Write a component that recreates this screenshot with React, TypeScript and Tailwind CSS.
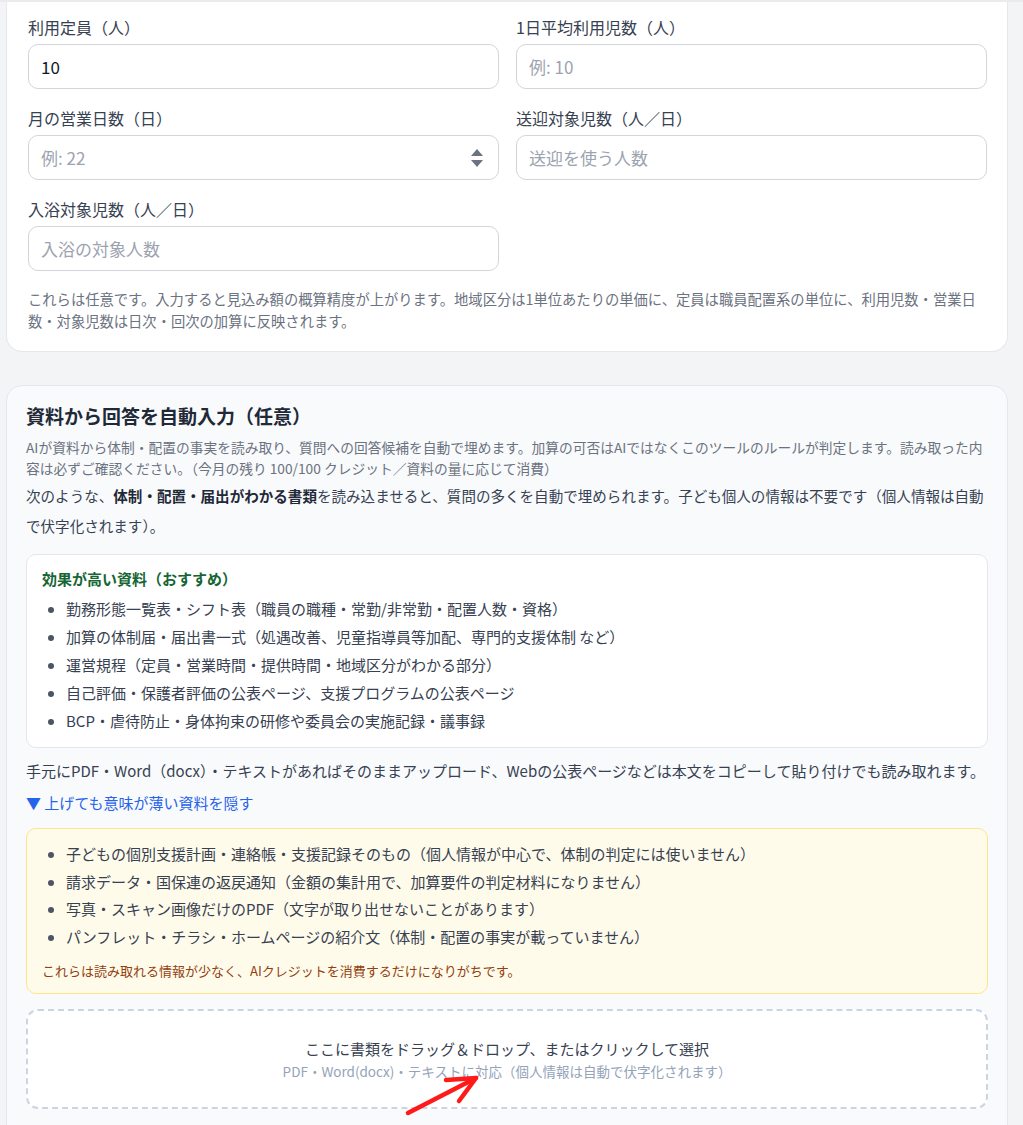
import React from 'react';

const jp = { fontFamily: '"Noto Sans CJK JP", "Liberation Sans", sans-serif' };

const Field: React.FC<{ label: string; value?: string; placeholder?: string; spinner?: boolean }> = ({
  label,
  value,
  placeholder,
  spinner,
}) => (
  <div className="flex flex-col">
    <label className="text-[16px] leading-[24px] text-[#374151]">{label}</label>
    <div className="mt-[5px] flex h-[45px] items-center rounded-[10px] border border-[#d1d5db] bg-white pl-[12px] pr-[12px]">
      {value ? (
        <span className="flex-1 text-[17px] text-[#111827]">{value}</span>
      ) : (
        <span className="flex-1 text-[17px] text-[#9ca3af]">{placeholder}</span>
      )}
      {spinner && (
        <svg width="14" height="22" viewBox="0 0 14 22" className="mr-[2px]">
          <path d="M7 2 L13 9 L1 9 Z" fill="#6b7280" />
          <path d="M7 20 L13 13 L1 13 Z" fill="#6b7280" />
        </svg>
      )}
    </div>
  </div>
);

const recommended = [
  '勤務形態一覧表・シフト表（職員の職種・常勤/非常勤・配置人数・資格）',
  '加算の体制届・届出書一式（処遇改善、児童指導員等加配、専門的支援体制 など）',
  '運営規程（定員・営業時間・提供時間・地域区分がわかる部分）',
  '自己評価・保護者評価の公表ページ、支援プログラムの公表ページ',
  'BCP・虐待防止・身体拘束の研修や委員会の実施記録・議事録',
];

const weak = [
  '子どもの個別支援計画・連絡帳・支援記録そのもの（個人情報が中心で、体制の判定には使いません）',
  '請求データ・国保連の返戻通知（金額の集計用で、加算要件の判定材料になりません）',
  '写真・スキャン画像だけのPDF（文字が取り出せないことがあります）',
  'パンフレット・チラシ・ホームページの紹介文（体制・配置の事実が載っていません）',
];

export default function App() {
  return (
    <div className="relative min-h-screen bg-[#f3f4f6] pl-[6px] pr-[15px]" style={jp}>
      <div className="h-[2px] bg-[#ebebeb] -ml-[6px] -mr-[15px]" />

      {/* 基本情報カード */}
      <div className="rounded-b-[16px] border border-t-0 border-[#e5e7eb] bg-white pb-[19px] pl-[21px] pr-[20px] pt-[13px]">
        <div className="grid grid-cols-2 gap-x-[17px] gap-y-[17px]">
          <Field label="利用定員（人）" value="10" />
          <Field label="1日平均利用児数（人）" placeholder="例: 10" />
          <Field label="月の営業日数（日）" placeholder="例: 22" spinner />
          <Field label="送迎対象児数（人／日）" placeholder="送迎を使う人数" />
          <Field label="入浴対象児数（人／日）" placeholder="入浴の対象人数" />
        </div>
        <p className="mt-[17px] text-[14.3px] leading-[22px] text-[#6b7280]">
          これらは任意です。入力すると見込み額の概算精度が上がります。地域区分は1単位あたりの単価に、定員は職員配置系の単位に、利用児数・営業日数・対象児数は日次・回次の加算に反映されます。
        </p>
      </div>

      {/* 資料アップロードカード */}
      <div className="mt-[33px] rounded-[16px] border border-[#e2e8f0] bg-[#f8fafc] px-[19px] pb-[40px] pt-[16px]">
        <h2 className="text-[19px] font-bold leading-[28px] text-[#1f2937]">資料から回答を自動入力（任意）</h2>
        <p className="mt-[7px] text-[13.75px] leading-[21px] text-[#6b7280]">
          AIが資料から体制・配置の事実を読み取り、質問への回答候補を自動で埋めます。加算の可否はAIではなくこのツールのルールが判定します。読み取った内容は必ずご確認ください。（今月の残り 100/100 クレジット／資料の量に応じて消費）
        </p>
        <p className="mt-[2px] text-[14.55px] leading-[30px] text-[#374151]">
          次のような、<span className="font-bold text-[#1f2937]">体制・配置・届出がわかる書類</span>
          を読み込ませると、質問の多くを自動で埋められます。子ども個人の情報は不要です（個人情報は自動で伏字化されます）。
        </p>

        <div className="mt-[13px] rounded-[10px] border border-[#e5e7eb] bg-white pb-[12px] pl-[15px] pr-[15px] pt-[12px]">
          <div className="text-[15px] font-bold leading-[24px] text-[#166534]">効果が高い資料（おすすめ）</div>
          <ul className="mt-[4px] list-disc pl-[24px] text-[15px] leading-[28px] text-[#374151] marker:text-[#4b5563]">
            {recommended.map((r) => (
              <li key={r}>{r}</li>
            ))}
          </ul>
        </div>

        <p className="mt-[11px] text-[15px] leading-[24px] text-[#374151]">
          手元にPDF・Word（docx）・テキストがあればそのままアップロード、Webの公表ページなどは本文をコピーして貼り付けでも読み取れます。
        </p>
        <button className="mt-[8px] block text-[15px] leading-[24px] text-[#2563eb]">▼ 上げても意味が薄い資料を隠す</button>

        <div className="mt-[13px] rounded-[10px] border border-[#fde68a] bg-[#fffbeb] pb-[12px] pl-[15px] pr-[15px] pt-[11px]">
          <ul className="list-disc pl-[24px] text-[15px] leading-[27.5px] text-[#374151] marker:text-[#4b5563]">
            {weak.map((w) => (
              <li key={w}>{w}</li>
            ))}
          </ul>
          <p className="mt-[11px] text-[13px] leading-[20px] text-[#92400e]">
            これらは読み取れる情報が少なく、AIクレジットを消費するだけになりがちです。
          </p>
        </div>

        <div className="mt-[15px] flex h-[100px] flex-col items-center justify-center rounded-[12px] border-2 border-dashed border-[#cbd5e1] bg-white">
          <div className="text-[15px] leading-[23px] text-[#374151]">ここに書類をドラッグ＆ドロップ、またはクリックして選択</div>
          <div className="text-[13.5px] leading-[22px] text-[#94a3b8]">
            PDF・Word(docx)・テキストに対応（個人情報は自動で伏字化されます）
          </div>
        </div>
      </div>

      {/* 注釈の赤い矢印 */}
      <svg className="pointer-events-none absolute left-0 top-0" width="1023" height="1125" viewBox="0 0 1023 1125">
        <path d="M408 1113 L476 1078" stroke="#ff1a1a" strokeWidth="4.5" strokeLinecap="round" fill="none" />
        <path d="M446 1080 L476 1078 L459 1101" stroke="#ff1a1a" strokeWidth="4.5" strokeLinecap="round" strokeLinejoin="round" fill="none" />
      </svg>
    </div>
  );
}
